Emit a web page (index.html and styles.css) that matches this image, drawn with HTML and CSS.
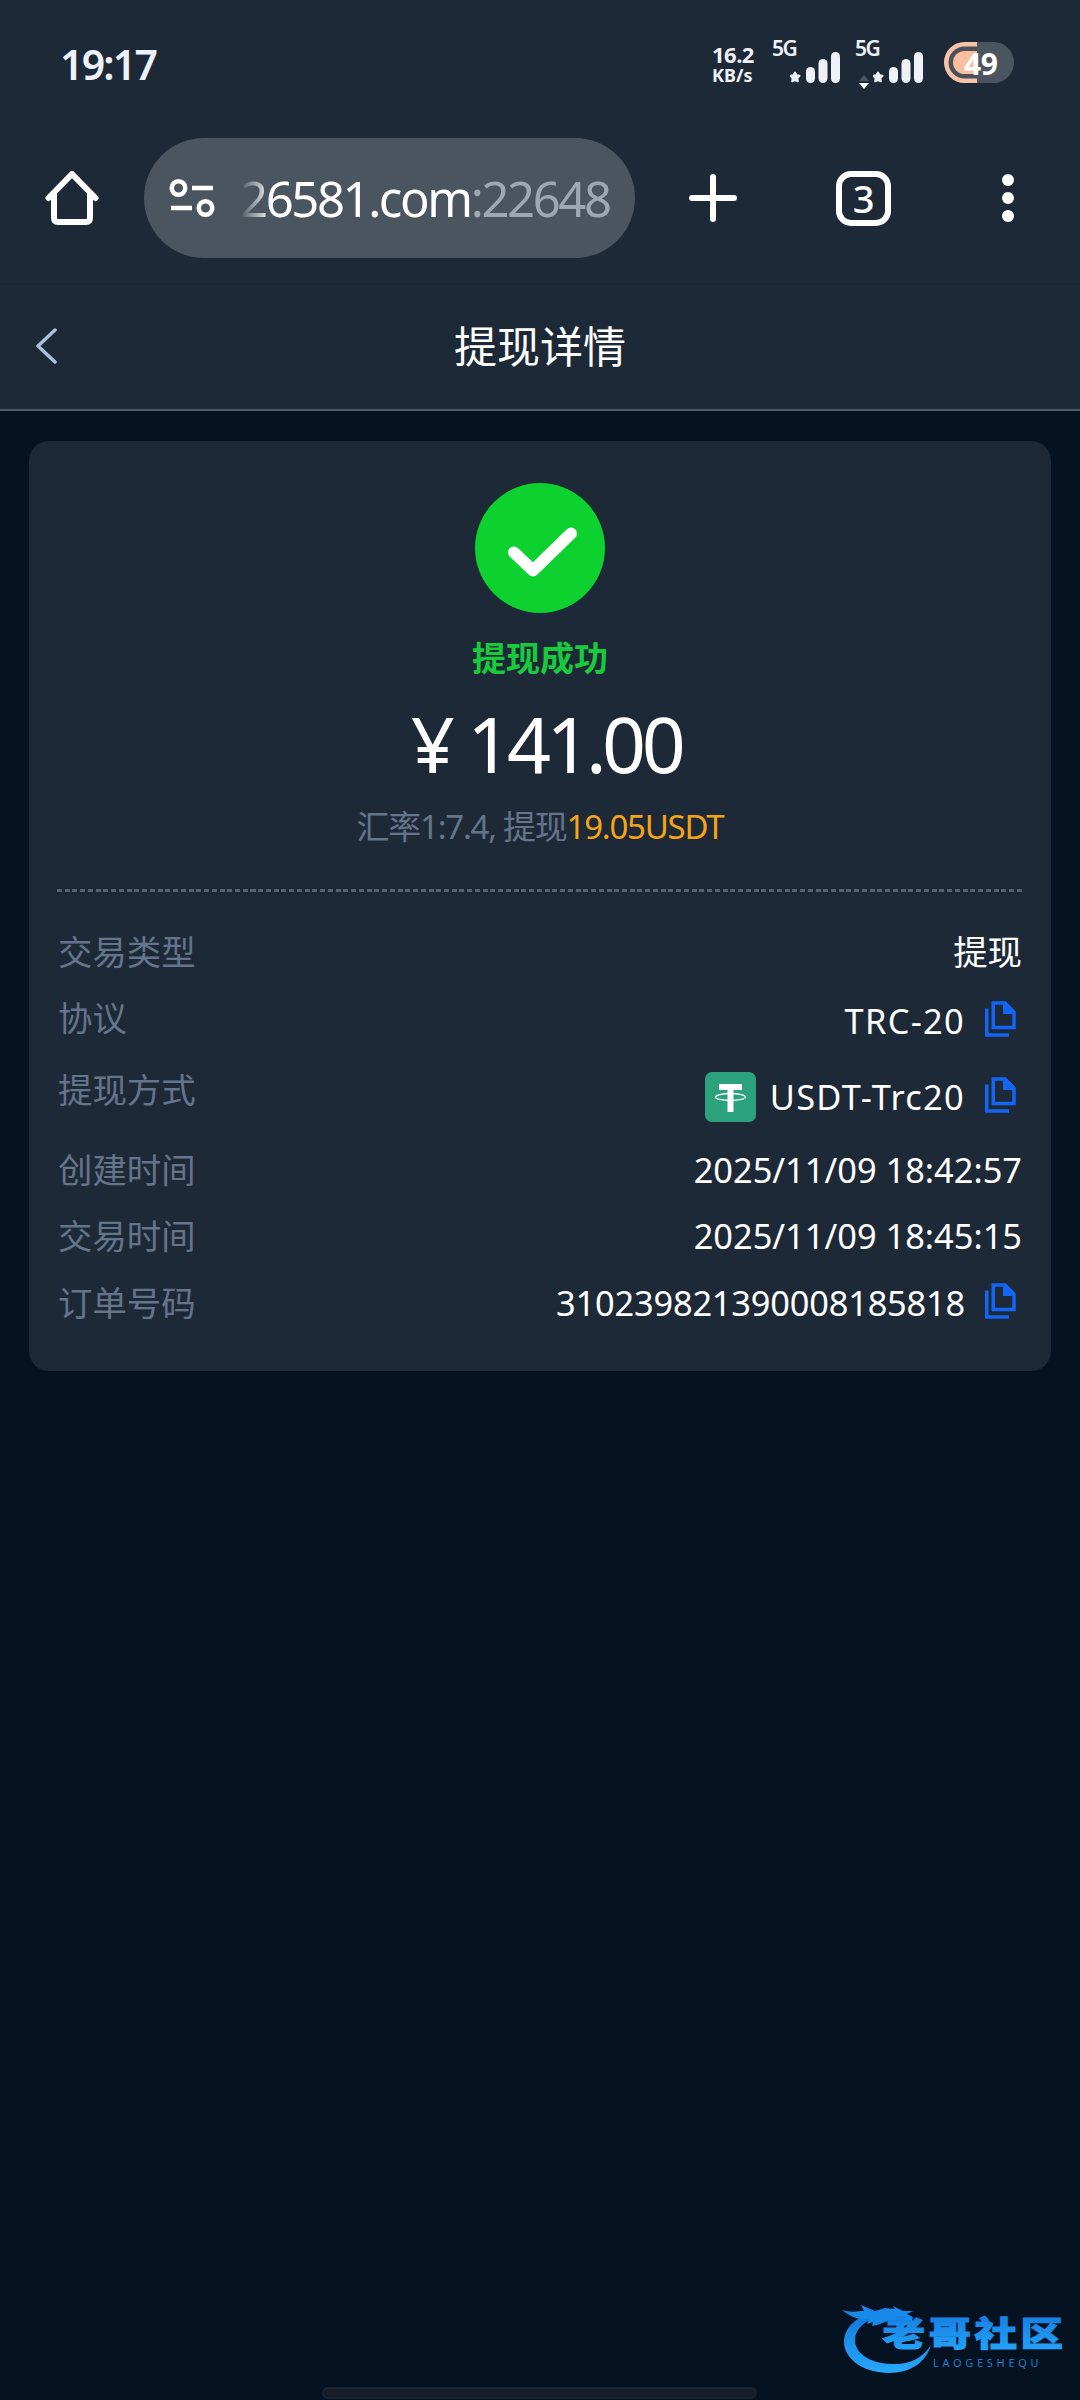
FILE: index.html
```html
<!DOCTYPE html>
<html lang="zh-CN">
<head>
  <meta charset="UTF-8">
  <title>提现详情</title>
  <link rel="stylesheet" href="styles.css">
</head>
<body>

  <!-- icons used more than once -->
  <svg class="defs" width="0" height="0">
    <symbol id="icon-signal" viewBox="0 0 50 34">
      <path d="M5 22.500l1.500 2.700 3 .6-2.100 2.400.4 3.100L5 30l-2.800 1.300.4-3.100-2.100-2.400 3-.6z" stroke-width="2" stroke-linejoin="round" stroke="currentColor"/>
      <rect x="16" y="17" width="9" height="16" rx="4.500"/>
      <rect x="28.500" y="9" width="9" height="24" rx="4.500"/>
      <rect x="41" y="2" width="9" height="31" rx="4.500"/>
    </symbol>
    <symbol id="icon-copy" viewBox="0 0 31 36">
      <path d="M1.750 7.500V34H24" fill="none" stroke="currentColor" stroke-width="3.500"/>
      <path d="M8.250 2H20l9 9.500V26.500H8.250z" fill="none" stroke="currentColor" stroke-width="3.500"/>
      <path d="M18 1h3l9 9v3H18z"/>
    </symbol>
  </svg>

  <div class="status-bar">
    <div class="clock">19:17</div>
    <div class="speed">
      <span class="speed-value">16.2</span>
      <span class="speed-unit">KB/s</span>
    </div>
    <div class="signal">
      <span>5G</span>
      <svg width="50" height="34"><use href="#icon-signal"/></svg>
    </div>
    <div class="signal second">
      <span>5G</span>
      <svg class="arrows" width="10" height="14" viewBox="0 0 10 14"><path d="M0 6L5 0l5 6z" fill="#4b5663"/><path d="M0 8h10l-5 6z" fill="#fff"/></svg>
      <svg width="50" height="34"><use href="#icon-signal"/></svg>
    </div>
    <div class="battery">
      <svg width="70" height="41" viewBox="0 0 70 41">
        <rect width="70" height="41" rx="20.500" fill="#4b5560"/>
        <path d="M33 0H20.500a20.500 20.500 0 0 0 0 41H33z" fill="#f5c3a7"/>
        <path d="M33 4.500H20.500a16 16 0 0 0 0 32H33z" fill="#4b4f59"/>
        <path d="M33 9H20.500a11.500 11.500 0 0 0 0 23H33z" fill="#f8bf9e"/>
      </svg>
      <span>49</span>
    </div>
  </div>

  <div class="browser-bar">
    <svg class="home" width="54" height="56" viewBox="0 0 54 56" fill="none" stroke="#fff" stroke-width="6" stroke-linecap="round" stroke-linejoin="round">
      <path d="M3.500 28L27 4l23.500 24M9 24v24q0 4 4 4h28q4 0 4-4V24"/>
    </svg>
    <div class="address">
      <svg width="46" height="40" viewBox="0 0 46 40" fill="none" stroke="#fff" stroke-width="4.500">
        <circle cx="9.500" cy="10" r="6.800"/>
        <path d="M23 10h21M2 30h21"/>
        <circle cx="36.500" cy="30" r="6.800"/>
      </svg>
      <div class="url">26581.com<span>:22648</span></div>
    </div>
    <svg class="plus" width="48" height="48" viewBox="0 0 48 48" stroke="#fff" stroke-width="6" stroke-linecap="round">
      <path d="M24 3v42M3 24h42"/>
    </svg>
    <div class="tabs">3</div>
    <svg class="menu" width="12" height="48" viewBox="0 0 12 48" fill="#fff">
      <circle cx="6" cy="6" r="6"/><circle cx="6" cy="24" r="6"/><circle cx="6" cy="42" r="6"/>
    </svg>
  </div>

  <div class="page-header">
    <svg class="back" width="24" height="36" viewBox="0 0 24 36" fill="none" stroke="#a9bfdc" stroke-width="3.500" stroke-linecap="round" stroke-linejoin="round">
      <path d="M20 2L3 18l17 16"/>
    </svg>
    <h1>提现详情</h1>
  </div>

  <div class="card">
    <div class="result">
      <svg width="130" height="130" viewBox="0 0 130 130">
        <circle cx="65" cy="65" r="65" fill="#0cd12f"/>
        <path d="M39 69.500L58 87.500l38-37" fill="none" stroke="#fff" stroke-width="12" stroke-linecap="round" stroke-linejoin="round"/>
      </svg>
      <div class="result-text">提现成功</div>
      <div class="amount"><span>¥</span>141.00</div>
      <div class="rate">汇率1:7.4, 提现<span>19.05USDT</span></div>
    </div>

    <div class="divider"></div>

    <div class="row">
      <div class="label">交易类型</div>
      <div class="value">提现</div>
    </div>
    <div class="row protocol">
      <div class="label">协议</div>
      <div class="value latin">TRC-20<svg class="copy"><use href="#icon-copy"/></svg></div>
    </div>
    <div class="row method">
      <div class="label">提现方式</div>
      <div class="value latin">
        <svg class="coin" width="51" height="50" viewBox="0 0 51 50">
          <rect width="51" height="50" rx="7" fill="#2ba27c"/>
          <path d="M14 12h23v6h-8.500v22h-6V18H14z" fill="#fff"/>
          <ellipse cx="25.500" cy="25" rx="15" ry="3.500" fill="none" stroke="#fff" stroke-width="1.300"/>
        </svg>USDT-Trc20<svg class="copy"><use href="#icon-copy"/></svg>
      </div>
    </div>
    <div class="row">
      <div class="label">创建时间</div>
      <div class="value">2025/11/09 18:42:57</div>
    </div>
    <div class="row">
      <div class="label">交易时间</div>
      <div class="value">2025/11/09 18:45:15</div>
    </div>
    <div class="row order">
      <div class="label">订单号码</div>
      <div class="value">310239821390008185818<svg class="copy"><use href="#icon-copy"/></svg></div>
    </div>
  </div>

  <svg class="watermark" width="230" height="80" viewBox="0 0 230 80">
    <defs>
      <linearGradient id="blue" x1="0" y1="0" x2="0" y2="1">
        <stop offset="0" stop-color="#1277dd"/>
        <stop offset="1" stop-color="#27a8fb"/>
      </linearGradient>
    </defs>
    <!-- dragon ring -->
    <path d="M36 13C18 15 4 27 4 42c0 17 20 31 45 31 22 0 37-11 42-28-9 14-23 20-40 19-22-1-36-11-36-24 0-9 7-18 21-22z" fill="url(#blue)"/>
    <path d="M2 10q9 3 18 1l4 0-3-6 14 6 10-3 10 1-2-3 10 5 10 0-6 3 6 3-1 4-8-1-7 3-9-2-11 4-5 1 1-4-6 2 2-5q-14 2-27-9z" fill="#1689ea"/>
    <text x="34" y="46.500" class="mark-cn" transform="scale(1.250 1)">老哥社区</text>
    <text x="93" y="67" class="mark-en">LAOGESHEQU</text>
  </svg>

  <div class="gesture-bar"></div>

</body>
</html>
```
FILE: styles.css
```css
* {
  box-sizing: border-box;
}

body {
  position: relative;
  height: 2400px;
  margin: 0;
  overflow: hidden;
  background-color: #051222;
  color: #fff;
  font-family: "Noto Sans", "Noto Sans CJK SC", sans-serif;
}

svg {
  display: block;
  flex-shrink: 0;
}

.defs {
  position: absolute;
}

/* phone status bar */
.status-bar {
  display: flex;
  height: 138px;
  padding: 40px 66px 0 60px;
  background-color: #1e2938;
  color: #eef2f8;
}

.clock {
  flex: 1;
  font-size: 41px;
  line-height: 49px;
  font-weight: 600;
  letter-spacing: -1.8px;
}

.speed {
  display: flex;
  flex-direction: column;
  width: 60px;
  padding-top: 4px;
  font-weight: 700;
}

.speed-value {
  font-size: 22px;
  line-height: 21px;
  letter-spacing: -0.5px;
}

.speed-unit {
  font-size: 18px;
  line-height: 21px;
  letter-spacing: 0;
}

.signal {
  position: relative;
  width: 83px;
  height: 44px;
  padding: 10px 0 0 18px;
  fill: currentColor;
}

.signal svg {
  overflow: visible;
}

.signal span {
  position: absolute;
  left: 0;
  top: -3px;
  font-size: 21px;
  line-height: 22px;
  font-weight: 600;
  letter-spacing: -1.5px;
}

.second {
  width: 89px;
}

.signal .arrows {
  position: absolute;
  left: 4px;
  top: 35px;
}

.battery {
  position: relative;
  padding-top: 2px;
}

.battery span {
  position: absolute;
  left: 20px;
  top: 4px;
  font-size: 30px;
  line-height: 40px;
  font-weight: 700;
  letter-spacing: -0.5px;
  color: #fff;
}

/* browser toolbar */
.browser-bar {
  display: flex;
  align-items: center;
  height: 147px;
  padding: 0 66px 25px 45px;
  background-color: #1e2938;
  border-bottom: 2px solid #1a2431;
}

.address {
  display: flex;
  align-items: center;
  width: 492px;
  height: 120px;
  margin: 0 54px 0 45px;
  padding-left: 25px;
  border-radius: 60px;
  background-color: #4b5560;
}

.url {
  margin-left: 25px;
  font-size: 49px;
  line-height: 60px;
  letter-spacing: -2.400px;
  white-space: nowrap;
  -webkit-mask-image: linear-gradient(to right, transparent 0, #000 32px);
  mask-image: linear-gradient(to right, transparent 0, #000 32px);
}

.url span {
  color: #9fa7b2;
}

.tabs {
  width: 55px;
  height: 55px;
  margin: 0 111px 0 99px;
  border: 6px solid #fff;
  border-radius: 15px;
  font-size: 38px;
  line-height: 42px;
  font-weight: 500;
  text-align: center;
}

/* page */
.page-header {
  display: flex;
  align-items: center;
  height: 126px;
  padding: 0 35px 3px;
  background-color: #1e2938;
  border-bottom: 2px solid #4d5967;
}

.page-header h1 {
  flex: 1;
  margin: 0 24px 3px 0;
  font-size: 43px;
  font-weight: 400;
  text-align: center;
}

.card {
  height: 930px;
  margin: 30px 29px 0;
  padding: 42px 28px 0;
  border-radius: 20px;
  background-color: #1e2938;
}

.result {
  display: flex;
  flex-direction: column;
  align-items: center;
  height: 406px;
}

.result-text {
  margin-top: 20px;
  font-size: 34px;
  line-height: 50px;
  font-weight: 700;
  color: #17cb3c;
}

.amount {
  margin: 16px 0 0 12px;
  font-size: 77px;
  line-height: 90px;
  letter-spacing: -4.5px;
}

.amount span {
  margin-right: 17px;
}

.rate {
  margin-top: 13px;
  font-size: 33px;
  line-height: 50px;
  letter-spacing: -1.250px;
  color: #64748b;
}

.rate span {
  color: #f5a416;
}

.divider {
  height: 3px;
  margin-bottom: 27px;
  background: repeating-linear-gradient(to right, #566274 0, #566274 5px, transparent 5px, transparent 7.740px);
}

.row {
  display: flex;
  justify-content: space-between;
  height: 66px;
  padding: 0 1px;
  font-size: 34.400px;
  line-height: 66px;
}

.label {
  color: #64748b;
}

.value {
  display: flex;
  align-items: center;
}

.latin {
  letter-spacing: 1.300px;
}

.protocol {
  height: 72px;
}

.method {
  height: 80px;
}

.order {
  margin-top: 1px;
}

.order .value {
  letter-spacing: -0.200px;
}

.copy {
  width: 31px;
  height: 36px;
  margin: 0 6px 4px 20px;
  color: #1366f5;
  fill: currentColor;
}

.coin {
  margin-right: 14px;
}

.watermark {
  position: absolute;
  left: 840px;
  top: 2300px;
}

.mark-cn {
  font-family: "Noto Sans CJK SC", sans-serif;
  font-size: 34px;
  font-weight: 900;
  letter-spacing: 2.800px;
  fill: url(#blue);
  stroke: url(#blue);
  stroke-width: 1px;
}

.mark-en {
  font-size: 11px;
  letter-spacing: 3.700px;
  fill: #1c7fca;
}

.gesture-bar {
  position: absolute;
  left: 322px;
  top: 2387px;
  width: 435px;
  height: 12px;
  border: 2px solid #192331;
  border-radius: 6px;
  background-color: #151d28;
}
```
